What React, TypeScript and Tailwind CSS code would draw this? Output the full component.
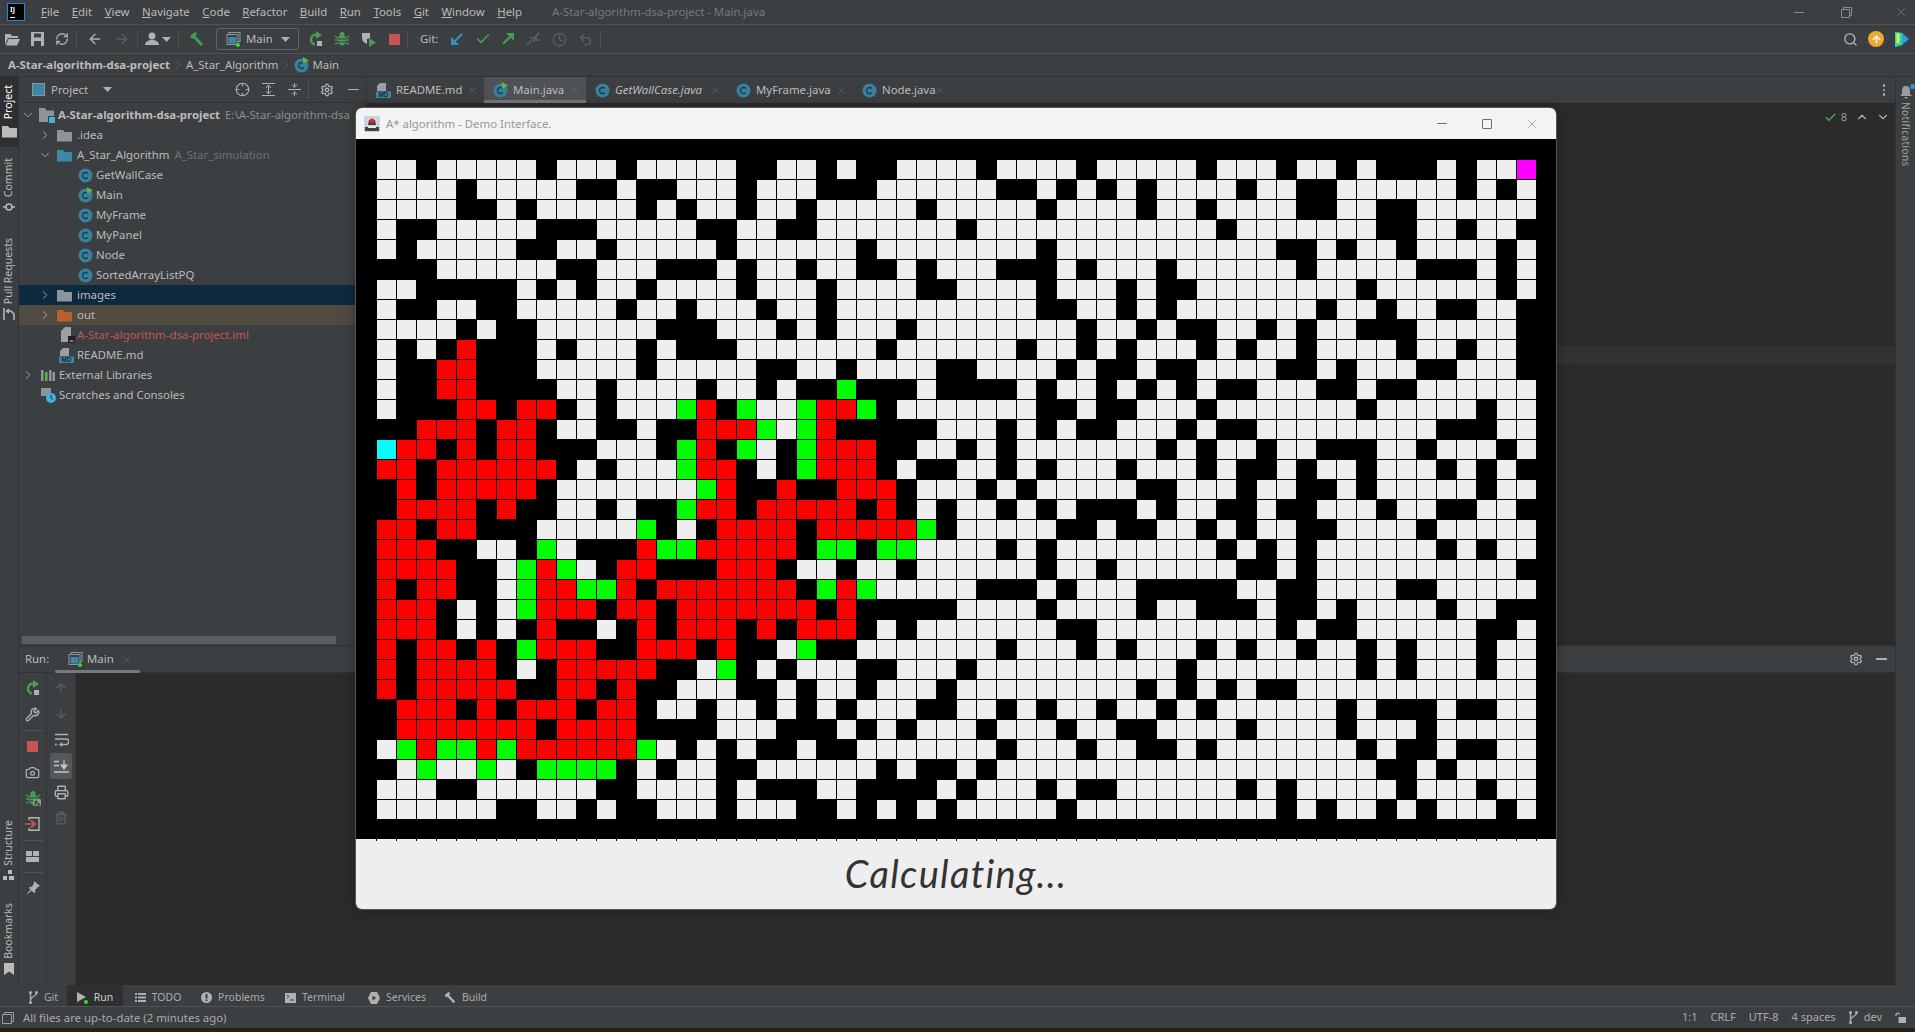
import { ReactNode } from "react";
import {
  ArrowDown,
  ArrowLeft,
  ArrowRight,
  ArrowUp,
  Camera,
  Check,
  ChevronDown,
  ChevronRight,
  ChevronUp,
  Clock,
  Crosshair,
  Printer,
  RefreshCw,
  Search,
  Settings,
  Trash2,
  Undo2,
  Wrench,
  X,
} from "lucide-react";

const GRID_LEFT = [
  "..#.....#...#.....##..#.##...",
  "....#.....##.##...#...###....",
  "....##.#.....#.#..#..#.....#.",
  ".##.....###.....##..##.......",
  ".#.....##..#.....#......#....",
  "###......##...###.#..#..##.#.",
  "..#####.#.#..#....#...#....##",
  ".##..##.....#..#...#..#......",
  "....#.##......###...#.#...#..",
  ".#.#R###.#...#.###.......#...",
  ".##RR###.....#.....##..#....#",
  ".##RR####..#....#..#.##G###.#",
  ".###RR#RR#.#...GR#G..GRRG#...",
  "##RRR#RR#..##.##RRRG.GR#####.",
  "CRR#R#RR###...#GR#G.#GRRR##..",
  "RR#RRRRRR#.#...GRR#.#GRRR#.##",
  "#R#RRRRR#.......GR##R##RRR#..",
  "#RRRR#R##..#.##GRR#RRRRR#R#.#",
  "RR#RR###.....G#.#RRRR#RRRRRG#",
  "RRR##..#G.###RGGRRRRR#GG#GG..",
  "RRRR##.GRG.#RR###RRR#..#..#..",
  "R#RR##.GRRGGR#RRRRRRR#GRG....",
  "RRR#.#.GRRR#RR#RRRRRRR#R#####",
  "RRR#.#.#R##.#R#RRR#R#RRR#.#..",
  "R#RR#R#GRRR##RRR#R##.G##.....",
  "R#RRRR#.#RRRRR##.G#.#...##...",
  "R#RRRRR##RR#R##...##.#..#...#",
  "#RRR#R#RRR#RR#..#..#.#.#...##",
  "#RRRRRRR#RRRR####...###.#.#..",
  ".GRGGRGRRRRRRG.#.#.##.##.....",
  "#.G..G.#GGGG#.#..##......#.##",
  "...##......##....#.###..####.",
  "......##..#.##...#...##.#.#.#",
];

const GRID_RIGHT = [
  ".#....#.....#...#..#.###.#..M",
  "..##.#.#.#....#..##......#.#.",
  "....#....#..#....##..##......",
  "#............#.......##..#..#",
  "....#...........##.#..#....#.",
  "..###.#...#......#.....###.#.",
  "....#...#.##........#......#.",
  "....##..#.#.......#..#..##..#",
  "......#..#.##..#.#..###.....#",
  "...#..#.#...#.#..#....#..#..#",
  "#....#.##.##....##.#...##...#",
  "###.#..#.#.#.##...##.##......",
  "....##.##...#.......#.....#..",
  "..#.#.##...#.##.........###..",
  "#.#.......#.#..#..###..#...#.",
  "..#.#...#...#.##.#..#...#.#.#",
  ".#.#.....##...#..##.#.....#..",
  "..#.#.###.#..##.##...#..##..#",
  ".....##.##..#.#..##....#.....",
  "..#.#........#.#.#......#.#..",
  "....#..#......##.#..........#",
  ".###.#...#####..##....##.....",
  "....#....#..###.##.#....#..##",
  ".....##.........#.##......##.",
  "..#...#.#...#.#..#..#.#...#..",
  "#..........#........#.#...#..",
  ".........#.#.#.##............",
  "..#.#..#..#.#......#.###.##..",
  ".#...#..##....#....#...#.....",
  "..#...#..##.#.......#.##.##..",
  ".#...................##.#....",
  "#...#.##......#.#.....#...#..",
  ".....#..........#.#..#.#...#.",
];

const CELL_CLASS: Record<string, string> = {
  ".": "bg-[#eeeeee]",
  "#": "bg-black",
  R: "bg-[#ff0000]",
  G: "bg-[#00ff00]",
  C: "bg-[#00ffff]",
  M: "bg-[#ff00ff]",
};

const dim = "#afb1b3";

function FolderIcon({ color = "#8c959c" }: { color?: string }) {
  return (
    <svg width="15" height="13" viewBox="0 0 15 13" className="shrink-0">
      <path d="M0 1h6l1.500 2H15v9.500H0z" fill={color} />
    </svg>
  );
}

function RootFolderIcon() {
  return (
    <svg width="16" height="15" viewBox="0 0 16 15" className="shrink-0">
      <path d="M0 0h6l1.500 2.500H15V8H9v6H0z" fill="#8c959c" />
      <rect x="10" y="9" width="6" height="6" fill="#3fb0e0" />
    </svg>
  );
}

function ClassIcon({ run }: { run?: boolean }) {
  return (
    <svg width="15" height="15" viewBox="0 0 15 15" className="shrink-0 overflow-visible">
      <circle cx="7.500" cy="7.500" r="7" fill="#3b7f9e" />
      <path d="M9.800 5.500a3 3 0 1 0 0 4" fill="none" stroke="#173f50" strokeWidth="1.400" />
      {run && <path d="M9 -1l6 3.500L9 6z" fill="#62b543" />}
    </svg>
  );
}

function MdIcon() {
  return (
    <svg width="15" height="15" viewBox="0 0 15 15" className="shrink-0">
      <path d="M4 0h6v8H1V3z" fill="#9aa0a5" />
      <rect x="0" y="8.500" width="15" height="6.500" fill="#3b87a8" />
      <text x="7.500" y="14" textAnchor="middle" fontSize="6.500" fontWeight="700" fill="#1e2b32" fontFamily="Liberation Sans, sans-serif">
        MD
      </text>
    </svg>
  );
}

function ImlIcon() {
  return (
    <svg width="14" height="16" viewBox="0 0 14 16" className="shrink-0">
      <path d="M4 0h6v15H0V4z" fill="#9aa0a5" />
      <rect x="7" y="9" width="7" height="7" fill="#1e1f20" />
      <rect x="8.500" y="13.500" width="4" height="1" fill="#d0d0d0" />
    </svg>
  );
}

function RunConfigIcon({ size = 15 }: { size?: number }) {
  return (
    <svg width={size} height={size} viewBox="0 0 15 15" className="shrink-0 overflow-visible">
      <rect x="3" y="0.500" width="11" height="9" fill="none" stroke="#8c959c" />
      <rect x="1" y="2.500" width="11" height="10" fill="#3c3f41" stroke="#8c959c" />
      <rect x="2.500" y="5" width="8" height="6.500" fill="#3b87a8" />
      <circle cx="12" cy="13" r="2" fill="#2fe02f" />
    </svg>
  );
}

function RerunIcon() {
  return (
    <svg width="16" height="16" viewBox="0 0 16 16" className="shrink-0">
      <path d="M8 3.500A5 5 0 0 0 3 8.500c0 2.500 1.700 4.500 4 5" fill="none" stroke="#499c54" strokeWidth="2.400" />
      <path d="M8 0l6 4-6 4z" fill="#499c54" />
      <rect x="9" y="10" width="5" height="5" fill="#afb1b3" />
    </svg>
  );
}

function BugIcon({ color = "#499c54", badge }: { color?: string; badge?: boolean }) {
  return (
    <svg width="16" height="16" viewBox="0 0 16 16" className="shrink-0">
      <ellipse cx="8" cy="9" rx="4" ry="5.500" fill={color} />
      <circle cx="8" cy="3.500" r="2.500" fill={color} />
      <path d="M1 5l3 2M15 5l-3 2M1 9h3M15 9h-3M1 13.500l3-2M15 13.500l-3-2" stroke={color} strokeWidth="1.500" />
      <path d="M4 8h8M4 11h8" stroke="#3c3f41" strokeWidth="1" />
      {badge && <path d="M9 10h7v6H9zM11 15l4-4M12 11h3v3" fill="#3c3f41" stroke="#afb1b3" />}
    </svg>
  );
}

function CoverageIcon() {
  return (
    <svg width="16" height="16" viewBox="0 0 16 16" className="shrink-0">
      <path d="M1 2h8v5l-3 1v5c-3-1-5-3-5-6z" fill="#afb1b3" />
      <path d="M8 7l7 4.500L8 16z" fill="#499c54" />
    </svg>
  );
}

function StopSquare() {
  return <div className="h-[11px] w-[11px] shrink-0 bg-[#c75450]" />;
}

function HammerIcon({ color = "#499c54", size = 16 }: { color?: string; size?: number }) {
  return (
    <svg width={size} height={size} viewBox="0 0 16 16" className="shrink-0">
      <path d="M2 5l5-4 2 2-1.500 2L15 13l-2 2-7.500-8L4 8z" fill={color} />
    </svg>
  );
}

function UserIcon() {
  return (
    <svg width="15" height="14" viewBox="0 0 15 14" className="shrink-0">
      <circle cx="7" cy="4" r="3.500" fill="#afb1b3" />
      <path d="M0 13c0-3 3-5 7-5s7 2 7 5z" fill="#afb1b3" />
    </svg>
  );
}

function OpenFolderIcon() {
  return (
    <svg width="15" height="13" viewBox="0 0 15 13" className="shrink-0">
      <path d="M0 1h5.500L7 3h6v2H3L0 12z" fill="#afb1b3" />
      <path d="M3.500 6H15l-3 6.500H.800z" fill="#afb1b3" />
    </svg>
  );
}

function SaveIcon() {
  return (
    <svg width="13" height="14" viewBox="0 0 13 14" className="shrink-0">
      <path d="M0 0h13v14H0zM3 1.500v4h7v-4zM3 9v5h7V9z" fill="#afb1b3" fillRule="evenodd" />
    </svg>
  );
}

function Caret({ color = "#afb1b3" }: { color?: string }) {
  return (
    <svg width="9" height="5" viewBox="0 0 9 5" className="shrink-0">
      <path d="M0 0h9L4.500 5z" fill={color} />
    </svg>
  );
}

function ExpandIcon({ collapse }: { collapse?: boolean }) {
  return (
    <svg width="13" height="13" viewBox="0 0 13 13" className="shrink-0">
      {collapse ? (
        <path d="M0 6.500h13M6.500 0v3M4 1.500l2.500 3 2.500-3M6.500 13v-3M4 11.500l2.500-3 2.500 3" stroke="#afb1b3" fill="none" />
      ) : (
        <path d="M0 .500h13M0 12.500h13M4 5l2.500-3L9 5M4 8l2.500 3L9 8M6.500 2v9" stroke="#afb1b3" fill="none" />
      )}
    </svg>
  );
}

function Divider() {
  return <div className="mx-[7px] h-[18px] w-px shrink-0 bg-[#515151]" />;
}

function WrapIcon() {
  return (
    <svg width="15" height="14" viewBox="0 0 15 14" className="shrink-0">
      <path d="M1 1.500h13M1 6h11a2.500 2.500 0 0 1 0 5.500H7" stroke="#afb1b3" strokeWidth="1.500" fill="none" />
      <path d="M8 9l-3 2.500L8 14z" fill="#afb1b3" />
      <path d="M1 11.500h3" stroke="#afb1b3" strokeWidth="1.500" strokeDasharray="1.500 1" />
    </svg>
  );
}

function ScrollEndIcon() {
  return (
    <svg width="15" height="13" viewBox="0 0 15 13" className="shrink-0">
      <path d="M0 1.500h5M0 5.500h5M0 12h15" stroke="#c4c6c8" strokeWidth="1.500" />
      <path d="M10 0v7M7 5l3 4 3-4z" stroke="#c4c6c8" fill="#c4c6c8" strokeWidth="1.200" />
    </svg>
  );
}

function ExitIcon() {
  return (
    <svg width="15" height="14" viewBox="0 0 15 14" className="shrink-0">
      <path d="M4 3V.700h10v12.600H4V11" stroke="#afb1b3" strokeWidth="1.400" fill="none" />
      <path d="M0 7h8M6 3.500L10 7l-4 3.500" stroke="#c75450" strokeWidth="1.700" fill="none" />
    </svg>
  );
}

function LayoutIcon() {
  return (
    <svg width="13" height="11" viewBox="0 0 13 11" className="shrink-0">
      <path d="M0 0h6v5H0zM7 0h6v5H7zM0 6h13v5H0z" fill="#afb1b3" />
    </svg>
  );
}

function PinIcon() {
  return (
    <svg width="14" height="14" viewBox="0 0 14 14" className="shrink-0">
      <path d="M8 0l6 5-2 1-3 3 .5 2-1.500 1L3 7l1-1.500 2 .5 2-4zM4.500 8.500L0 14l5.500-4z" fill="#afb1b3" />
    </svg>
  );
}

function BranchIcon({ color = "#afb1b3" }: { color?: string }) {
  return (
    <svg width="9" height="13" viewBox="0 0 9 13" className="shrink-0">
      <circle cx="1.500" cy="1.500" r="1.500" fill={color} />
      <circle cx="1.500" cy="11.500" r="1.500" fill={color} />
      <circle cx="7.500" cy="1.500" r="1.500" fill={color} />
      <path d="M1.500 2v9M7.500 2c0 4-6 3-6 7" stroke={color} strokeWidth="1.300" fill="none" />
    </svg>
  );
}

function VText({ children, className = "" }: { children: ReactNode; className?: string }) {
  return <span className={`rotate-180 whitespace-nowrap [writing-mode:vertical-rl] ${className}`}>{children}</span>;
}

function Chevron({ open }: { open?: boolean }) {
  return open ? (
    <ChevronDown size={14} strokeWidth={1.500} color={dim} className="shrink-0" />
  ) : (
    <ChevronRight size={14} strokeWidth={1.500} color={dim} className="shrink-0" />
  );
}

function TreeRow({ pad, bg = "", children }: { pad: string; bg?: string; children: ReactNode }) {
  return <div className={`flex h-5 shrink-0 items-center whitespace-nowrap ${pad} ${bg}`}>{children}</div>;
}

function ProjectTree() {
  return (
    <div className="flex flex-col pt-[2px] text-[11.4px] text-[#bbbbbb]">
      <TreeRow pad="pl-[2px]">
        <Chevron open />
        <span className="ml-[4px]">
          <RootFolderIcon />
        </span>
        <span className="ml-[3px] font-bold">A-Star-algorithm-dsa-project</span>
        <span className="ml-[5px] text-[#8a8d8f]">E:\A-Star-algorithm-dsa</span>
      </TreeRow>
      <TreeRow pad="pl-[19px]">
        <Chevron />
        <span className="ml-[5px]">
          <FolderIcon />
        </span>
        <span className="ml-[5px]">.idea</span>
      </TreeRow>
      <TreeRow pad="pl-[19px]">
        <Chevron open />
        <span className="ml-[5px]">
          <FolderIcon color="#3f87a6" />
        </span>
        <span className="ml-[5px]">A_Star_Algorithm</span>
        <span className="ml-[5px] text-[#6e7072]">A_Star_simulation</span>
      </TreeRow>
      {["GetWallCase", "Main", "MyFrame", "MyPanel", "Node", "SortedArrayListPQ"].map((name) => (
        <TreeRow key={name} pad="pl-[59px]">
          <ClassIcon run={name === "Main"} />
          <span className="ml-[3px]">{name}</span>
        </TreeRow>
      ))}
      <TreeRow pad="pl-[19px]" bg="bg-[#0d293e]">
        <Chevron />
        <span className="ml-[5px]">
          <FolderIcon />
        </span>
        <span className="ml-[5px]">images</span>
      </TreeRow>
      <TreeRow pad="pl-[19px]" bg="bg-[#4f4b41]">
        <Chevron />
        <span className="ml-[5px]">
          <FolderIcon color="#b8612e" />
        </span>
        <span className="ml-[5px]">out</span>
      </TreeRow>
      <TreeRow pad="pl-[42px]">
        <ImlIcon />
        <span className="ml-[2px] text-[#c75450]">A-Star-algorithm-dsa-project.iml</span>
      </TreeRow>
      <TreeRow pad="pl-[40px]">
        <MdIcon />
        <span className="ml-[3px]">README.md</span>
      </TreeRow>
      <TreeRow pad="pl-[2px]">
        <Chevron />
        <svg width="14" height="13" viewBox="0 0 14 13" className="ml-[6px] shrink-0">
          <path d="M0 1h2.500v11H0zM8 1h2.500v11H8zM11.500 3H14v9h-2.500z" fill="#8c959c" />
          <path d="M4 3h2.500v9H4z" fill="#62b543" />
        </svg>
        <span className="ml-[4px]">External Libraries</span>
      </TreeRow>
      <TreeRow pad="pl-[22px]">
        <svg width="15" height="15" viewBox="0 0 15 15" className="mr-[3px] shrink-0">
          <path d="M0 0h10v8H0z" fill="#8c959c" />
          <circle cx="10" cy="10" r="5" fill="#3fb0e0" />
          <path d="M10 7v3l2 1.500" stroke="#1e2b32" fill="none" />
        </svg>
        <span>Scratches and Consoles</span>
      </TreeRow>
    </div>
  );
}

function EditorTab({ name, width, italic, active, icon }: { name: string; width: string; italic?: boolean; active?: boolean; icon: ReactNode }) {
  return (
    <div className={`relative flex h-full shrink-0 items-center pl-[9px] ${width} ${active ? "bg-[#4e5254]" : ""}`}>
      {icon}
      <span className={`ml-[5px] text-[#bbbbbb] ${italic ? "italic" : ""}`}>{name}</span>
      <X size={11} strokeWidth={1} color="#7a7c7e" className="absolute right-[6px] top-[8px]" />
      {active && <div className="absolute inset-x-0 bottom-0 h-[3px] bg-[#747a80]" />}
    </div>
  );
}

function MainToolbar() {
  return (
    <div className="flex h-[29px] shrink-0 items-center border-b border-[#515151] pl-[5px]">
      <OpenFolderIcon />
      <span className="ml-[11px]">
        <SaveIcon />
      </span>
      <RefreshCw size={14} strokeWidth={2.200} color={dim} className="ml-[11px]" />
      <Divider />
      <ArrowLeft size={16} strokeWidth={2} color={dim} className="ml-[3px]" />
      <ArrowRight size={16} strokeWidth={2} color="#5e6163" className="ml-[11px]" />
      <Divider />
      <UserIcon />
      <span className="ml-[2px]">
        <Caret />
      </span>
      <Divider />
      <span className="ml-[2px]">
        <HammerIcon />
      </span>
      <div className="ml-[12px] flex h-[22px] w-[83px] shrink-0 items-center rounded-[3px] border border-[#646464] pl-[9px]">
        <RunConfigIcon />
        <span className="ml-[5px] text-[11.4px] text-[#bbbbbb]">Main</span>
        <span className="ml-[8px]">
          <Caret />
        </span>
      </div>
      <span className="ml-[9px]">
        <RerunIcon />
      </span>
      <span className="ml-[10px]">
        <BugIcon />
      </span>
      <span className="ml-[11px]">
        <CoverageIcon />
      </span>
      <span className="ml-[12px]">
        <StopSquare />
      </span>
      <Divider />
      <span className="ml-[5px] text-[11.4px] text-[#bbbbbb]">Git:</span>
      <svg width="14" height="14" viewBox="0 0 14 14" className="ml-[12px] shrink-0">
        <path d="M12 2L3 11" stroke="#3592c4" strokeWidth="2" />
        <path d="M1 5v8h8z" fill="#3592c4" />
      </svg>
      <Check size={16} strokeWidth={2.500} color="#499c54" className="ml-[11px]" />
      <svg width="14" height="14" viewBox="0 0 14 14" className="ml-[10px] shrink-0">
        <path d="M2 12l9-9" stroke="#499c54" strokeWidth="2" />
        <path d="M5 1h8v8z" fill="#499c54" />
      </svg>
      <svg width="14" height="14" viewBox="0 0 14 14" className="ml-[11px] shrink-0">
        <path d="M1 13l5-5M8 6l5-5M4 6h4v4M10 4v4h4" stroke="#5e6163" strokeWidth="1.600" fill="none" />
      </svg>
      <Clock size={15} strokeWidth={2} color="#5e6163" className="ml-[12px]" />
      <Undo2 size={15} strokeWidth={2} color="#5e6163" className="ml-[11px]" />
      <Divider />
      <div className="ml-auto flex items-center pr-[6px]">
        <Search size={15} strokeWidth={2.200} color={dim} />
        <div className="ml-[10px] flex h-[16px] w-[16px] items-center justify-center rounded-full bg-[#f0a732]">
          <ArrowUp size={11} strokeWidth={3} color="#ffffff" />
        </div>
        <svg width="14" height="16" viewBox="0 0 14 16" className="ml-[11px] shrink-0">
          <path d="M0 1l7 1 7 6-7 6-7 2z" fill="#2b9fe0" />
          <path d="M0 1l7 1v12l-7 2z" fill="#27d9a0" />
          <path d="M1.500 2.500h3v10h-3z" fill="#f2e24a" />
        </svg>
      </div>
    </div>
  );
}

function MenuBar() {
  const items = ["File", "Edit", "View", "Navigate", "Code", "Refactor", "Build", "Run", "Tools", "Git", "Window", "Help"];
  return (
    <div className="flex h-[25px] shrink-0 items-center border-b border-[#515151] text-[11.4px] text-[#bbbbbb]">
      <div className="ml-[8px] flex h-[16px] w-[16px] shrink-0 flex-col justify-between bg-black px-[2px] py-[2px] ring-1 ring-[#2f7fe0]">
        <span className="text-[7px] font-bold leading-[8px] text-white">IJ</span>
        <span className="h-px w-[5px] bg-white" />
      </div>
      <div className="ml-[17px] flex gap-[12.500px]">
        {items.map((item) => (
          <span key={item}>
            <u>{item[0]}</u>
            {item.slice(1)}
          </span>
        ))}
      </div>
      <span className="ml-[30px] text-[#787a7c]">A-Star-algorithm-dsa-project - Main.java</span>
      <div className="ml-auto flex items-center pr-[7px] text-[#8a8d8f]">
        <div className="h-px w-[10px] bg-[#8a8d8f]" />
        <svg width="11" height="11" viewBox="0 0 11 11" className="ml-[37px]">
          <path d="M2.500 2.500V.500h8v8H8.500M.500 2.500h8v8h-8z" fill="none" stroke="#8a8d8f" />
        </svg>
        <X size={14} strokeWidth={1} color="#8a8d8f" className="ml-[42px]" />
      </div>
    </div>
  );
}

function Breadcrumb() {
  return (
    <div className="flex h-[23px] shrink-0 items-center border-b border-[#323232] pl-[8px] text-[11.4px] text-[#bbbbbb]">
      <span className="font-bold">A-Star-algorithm-dsa-project</span>
      <ChevronRight size={14} strokeWidth={1} color="#707274" className="mx-px" />
      <span>A_Star_Algorithm</span>
      <ChevronRight size={14} strokeWidth={1} color="#707274" className="mx-px" />
      <ClassIcon run />
      <span className="ml-[3px]">Main</span>
    </div>
  );
}

function LeftStripe() {
  return (
    <div className="flex w-[19px] shrink-0 flex-col items-center border-r border-[#323232] text-[10.5px] text-[#bbbbbb]">
      <div className="flex h-[70px] w-full flex-col items-center bg-[#2d2f30] pt-[8px] text-white">
        <VText>Project</VText>
        <div className="mt-[6px]">
          <FolderIcon color="#bbbbbb" />
        </div>
      </div>
      <VText className="mt-[11px]">Commit</VText>
      <svg width="12" height="12" viewBox="0 0 12 12" className="mt-[4px]">
        <circle cx="6" cy="6" r="3" fill="none" stroke="#bbbbbb" strokeWidth="1.500" />
        <path d="M0 6h3M9 6h3" stroke="#bbbbbb" strokeWidth="1.500" />
      </svg>
      <VText className="mt-[25px]">Pull Requests</VText>
      <svg width="12" height="12" viewBox="0 0 12 12" className="mt-[4px]">
        <path d="M1 0v12M11 12V6L8 3H4M6 1L3.500 3 6 5" stroke="#bbbbbb" strokeWidth="1.500" fill="none" />
      </svg>
      <VText className="mt-auto">Structure</VText>
      <svg width="12" height="11" viewBox="0 0 12 11" className="mt-[4px]">
        <path d="M5 0h4v4H5zM0 6h4v4H0zM6 6h5v4H6z" fill="#bbbbbb" />
      </svg>
      <VText className="mt-[22px]">Bookmarks</VText>
      <svg width="10" height="12" viewBox="0 0 10 12" className="mb-[10px] mt-[4px]">
        <path d="M0 0h10v12L5 8.500 0 12z" fill="#bbbbbb" />
      </svg>
    </div>
  );
}

function RightStripe() {
  return (
    <div className="flex w-[20px] shrink-0 flex-col items-center border-l border-[#323232] pt-[9px] text-[10px] text-[#a0a2a4]">
      <div className="relative">
        <svg width="12" height="13" viewBox="0 0 12 13">
          <path d="M6 0c3 0 4 2 4 5v3l2 2H0l2-2V5c0-3 1-5 4-5zM4 11h4l-2 2z" fill="#9a9c9e" />
        </svg>
        <div className="absolute right-[-3px] top-[-2px] h-[5px] w-[5px] rounded-full bg-[#3592c4]" />
      </div>
      <span className="mt-[3px] whitespace-nowrap tracking-[0.4px] [writing-mode:vertical-rl]">Notifications</span>
    </div>
  );
}

function RunIconCell({ children, active }: { children: ReactNode; active?: boolean }) {
  return (
    <div className={`flex h-[26px] w-full items-center justify-center ${active ? "rounded-[3px] bg-[#55585a]" : ""}`}>{children}</div>
  );
}

function RunSep() {
  return (
    <div className="flex h-[6px] w-full items-center justify-center">
      <div className="h-px w-[20px] bg-[#515151]" />
    </div>
  );
}

function RunPanel() {
  return (
    <div className="flex flex-1 flex-col">
      <div className="flex h-[27px] shrink-0 items-center border-b border-[#323232] text-[11.4px] text-[#bbbbbb]">
        <span className="ml-[6px] w-[30px]">Run:</span>
        <div className="relative flex h-full w-[85px] items-center pl-[13px]">
          <RunConfigIcon />
          <span className="ml-[4px]">Main</span>
          <X size={11} strokeWidth={1} color="#7a7c7e" className="ml-[7px]" />
          <div className="absolute inset-x-0 bottom-[-1px] h-[3px] rounded-full bg-[#747a80]" />
        </div>
        <Settings size={14} strokeWidth={2.200} color={dim} className="ml-auto mr-[13px]" />
        <div className="mr-[8px] h-[1.500px] w-[11px] bg-[#afb1b3]" />
      </div>
      <div className="flex min-h-0 flex-1">
        <div className="flex w-[28px] shrink-0 flex-col items-center border-r border-[#323232] pt-[2px]">
          <RunIconCell>
            <RerunIcon />
          </RunIconCell>
          <RunIconCell>
            <Wrench size={15} strokeWidth={2.200} color={dim} />
          </RunIconCell>
          <RunSep />
          <RunIconCell>
            <StopSquare />
          </RunIconCell>
          <RunIconCell>
            <Camera size={15} strokeWidth={2} color={dim} />
          </RunIconCell>
          <RunIconCell>
            <BugIcon badge />
          </RunIconCell>
          <RunIconCell>
            <ExitIcon />
          </RunIconCell>
          <RunSep />
          <RunIconCell>
            <LayoutIcon />
          </RunIconCell>
          <RunSep />
          <RunIconCell>
            <PinIcon />
          </RunIconCell>
        </div>
        <div className="flex w-[29px] shrink-0 flex-col items-center border-r border-[#323232] px-[3px] pt-[2px]">
          <RunIconCell>
            <ArrowUp size={14} strokeWidth={2} color="#5e6163" />
          </RunIconCell>
          <RunIconCell>
            <ArrowDown size={14} strokeWidth={2} color="#5e6163" />
          </RunIconCell>
          <RunIconCell>
            <WrapIcon />
          </RunIconCell>
          <RunIconCell active>
            <ScrollEndIcon />
          </RunIconCell>
          <RunIconCell>
            <Printer size={15} strokeWidth={2.200} color={dim} />
          </RunIconCell>
          <RunIconCell>
            <Trash2 size={14} strokeWidth={2.200} color="#5e6163" />
          </RunIconCell>
        </div>
        <div className="flex-1 bg-[#2b2b2b]" />
      </div>
    </div>
  );
}

function BottomTool({ icon, label, width, active }: { icon: ReactNode; label: string; width: string; active?: boolean }) {
  return (
    <div className={`flex h-full shrink-0 items-center justify-center gap-[6px] pt-[4px] ${width} ${active ? "bg-[#2d2f30] text-[#d0d0d0]" : ""}`}>
      {icon}
      <span>{label}</span>
    </div>
  );
}

function BottomToolbar() {
  return (
    <div className="flex h-[22px] shrink-0 items-center border-b border-[#515151] pl-[20px] text-[10.5px] text-[#a9abad]">
      <BottomTool width="w-[47px]" label="Git" icon={<BranchIcon />} />
      <BottomTool
        width="w-[56px]"
        active
        label="Run"
        icon={
          <svg width="11" height="12" viewBox="0 0 11 12" className="overflow-visible">
            <path d="M0 0l9 5-9 5z" fill="#afb1b3" />
            <circle cx="9" cy="10" r="2" fill="#2fe02f" />
          </svg>
        }
      />
      <BottomTool
        width="w-[70px]"
        label="TODO"
        icon={
          <svg width="11" height="9" viewBox="0 0 11 9">
            <path d="M0 0h2v2H0zM3 0h8v2H3zM0 3.500h2v2H0zM3 3.500h8v2H3zM0 7h2v2H0zM3 7h8v2H3z" fill="#afb1b3" />
          </svg>
        }
      />
      <BottomTool
        width="w-[80px]"
        label="Problems"
        icon={
          <svg width="11" height="11" viewBox="0 0 11 11">
            <circle cx="5.500" cy="5.500" r="5.500" fill="#afb1b3" />
            <path d="M4.500 2h2v4.500h-2zM4.500 7.500h2v1.500h-2z" fill="#3c3f41" />
          </svg>
        }
      />
      <BottomTool
        width="w-[84px]"
        label="Terminal"
        icon={
          <svg width="11" height="10" viewBox="0 0 11 10">
            <path d="M0 0h11v10H0z" fill="#afb1b3" />
            <path d="M2 2l2 1.500L2 5M5 7h4" stroke="#3c3f41" fill="none" />
          </svg>
        }
      />
      <BottomTool
        width="w-[80px]"
        label="Services"
        icon={
          <svg width="12" height="12" viewBox="0 0 12 12">
            <path d="M3 0h6l3 6-3 6H3L0 6z" fill="#afb1b3" />
            <path d="M4.500 3.500L8.500 6l-4 2.500z" fill="#3c3f41" />
          </svg>
        }
      />
      <BottomTool width="w-[56px]" label="Build" icon={<HammerIcon color="#afb1b3" size={13} />} />
    </div>
  );
}

function StatusBar() {
  return (
    <div className="flex h-[21px] shrink-0 items-center text-[11.4px] text-[#a9abad]">
      <svg width="12" height="12" viewBox="0 0 12 12" className="ml-[2px] shrink-0">
        <path d="M2.500 2.500V.500h9v9H9.500M.500 2.500h9v9h-9z" fill="none" stroke="#9a9c9e" />
      </svg>
      <span className="ml-[9px]">All files are up-to-date (2 minutes ago)</span>
      <div className="ml-auto flex items-center gap-[13px] pr-[9px] text-[11px]">
        <span>1:1</span>
        <span>CRLF</span>
        <span>UTF-8</span>
        <span>4 spaces</span>
        <span className="flex items-center gap-[6px]">
          <BranchIcon />
          dev
        </span>
        <svg width="11" height="11" viewBox="0 0 11 11" className="shrink-0">
          <path d="M1 4V2.500a1.800 1.800 0 0 1 3.500 0" stroke="#afb1b3" fill="none" strokeWidth="1.300" />
          <path d="M3.500 5H11v6H3.500z" fill="#afb1b3" />
        </svg>
      </div>
    </div>
  );
}

function DemoWindow() {
  return (
    <div className="absolute left-[356px] top-[108px] flex w-[1200px] flex-col overflow-hidden rounded-[6px] shadow-[0_0_14px_rgba(0,0,0,0.35)] ring-1 ring-[#555555]">
      <div className="flex h-[31px] shrink-0 items-center bg-[#f3f3f3] pl-[8px] text-[11.4px] text-[#989898]">
        <svg width="16" height="16" viewBox="0 0 16 16" className="shrink-0">
          <rect x="0" y="0" width="16" height="16" fill="#c9d5e3" />
          <path d="M5 4h6l1 5H4zM1 11h14v4H1z" fill="#3e4044" />
          <circle cx="8" cy="5" r="2.500" fill="#e8222a" />
          <path d="M4 10h8v2H4z" fill="#e8e8e8" />
        </svg>
        <span className="ml-[6px]">A* algorithm - Demo Interface.</span>
        <div className="ml-auto flex items-center pr-[17px]">
          <div className="h-px w-[10px] bg-[#707070]" />
          <div className="ml-[35px] h-[10px] w-[10px] rounded-[1px] border border-[#707070]" />
          <X size={14} strokeWidth={1} color="#707070" className="ml-[33px]" />
        </div>
      </div>
      <div className="h-[700px] bg-black pl-[21px] pt-[21px]">
        <div className="grid grid-cols-[repeat(58,19px)] auto-rows-[19px] gap-px">
          {GRID_LEFT.map((row, r) =>
            (row + GRID_RIGHT[r]).split("").map((cell, c) => <div key={`${r}-${c}`} className={CELL_CLASS[cell]} />),
          )}
        </div>
      </div>
      <div className="relative flex h-[70px] items-center justify-center bg-[#eeeeee] pb-[2px]">
        <div className="absolute left-0 top-0 flex pl-[20px]">
          {Array.from({ length: 59 }, (_, i) => (
            <div key={i} className="h-[2px] w-[20px] border-l border-black" />
          ))}
        </div>
        <span className="text-[38px] italic leading-none tracking-[1.300px] text-[#333333] [font-family:Lato,cursive]">Calculating...</span>
      </div>
    </div>
  );
}

export default function App() {
  return (
    <div className="relative flex h-[1032px] w-[1915px] flex-col overflow-hidden bg-[#3c3f41] [font-family:'Noto_Sans',sans-serif]">
      <MenuBar />
      <MainToolbar />
      <Breadcrumb />
      <div className="flex min-h-0 flex-1">
        <LeftStripe />
        <div className="flex min-w-0 flex-1 flex-col">
          <div className="flex h-[569px] shrink-0 border-b border-[#323232]">
            <div className="flex w-[348px] shrink-0 flex-col border-r border-[#323232]">
              <div className="flex h-[26px] shrink-0 items-center border-b border-[#323232] pl-[13px] text-[11.4px] text-[#bbbbbb]">
                <svg width="13" height="13" viewBox="0 0 13 13" className="shrink-0">
                  <rect x="0.500" y="0.500" width="12" height="12" fill="#3b87a8" stroke="#8c959c" />
                </svg>
                <span className="ml-[6px] pt-px">Project</span>
                <span className="ml-[15px]">
                  <Caret />
                </span>
                <Crosshair size={15} strokeWidth={1.800} color={dim} className="ml-[123px]" />
                <span className="ml-[12px]">
                  <ExpandIcon />
                </span>
                <span className="ml-[13px]">
                  <ExpandIcon collapse />
                </span>
                <Divider />
                <Settings size={14} strokeWidth={2.200} color={dim} className="ml-[4px]" />
                <div className="ml-[14px] h-[1.500px] w-[11px] bg-[#afb1b3]" />
              </div>
              <div className="relative min-h-0 flex-1 overflow-hidden">
                <ProjectTree />
                <div className="absolute bottom-[1px] left-[3px] h-[8px] w-[314px] bg-[#5a5c5e]" />
              </div>
            </div>
            <div className="flex min-w-0 flex-1 flex-col">
              <div className="flex h-[26px] shrink-0 items-center text-[11.4px]">
                <EditorTab name="README.md" width="w-[117px]" icon={<MdIcon />} />
                <EditorTab name="Main.java" width="w-[102px]" active icon={<ClassIcon run />} />
                <EditorTab name="GetWallCase.java" width="w-[141px]" italic icon={<ClassIcon />} />
                <EditorTab name="MyFrame.java" width="w-[126px]" icon={<ClassIcon />} />
                <EditorTab name="Node.java" width="w-[98px]" icon={<ClassIcon />} />
                <div className="ml-auto mr-[10px] flex flex-col gap-[2px]">
                  <div className="h-[2.500px] w-[2.500px] rounded-full bg-[#afb1b3]" />
                  <div className="h-[2.500px] w-[2.500px] rounded-full bg-[#afb1b3]" />
                  <div className="h-[2.500px] w-[2.500px] rounded-full bg-[#afb1b3]" />
                </div>
              </div>
              <div className="flex min-h-0 flex-1 flex-col bg-[#2b2b2b]">
                <div className="flex h-[28px] shrink-0 items-center justify-end pr-[5px] text-[11px] text-[#8a9aa8]">
                  <Check size={13} strokeWidth={3} color="#499c54" />
                  <span className="ml-[4px]">8</span>
                  <ChevronUp size={14} strokeWidth={2} color={dim} className="ml-[8px]" />
                  <ChevronDown size={14} strokeWidth={2} color={dim} className="ml-[7px]" />
                </div>
                <div className="mt-[215px] h-[18px] bg-[#323232]" />
              </div>
            </div>
          </div>
          <RunPanel />
        </div>
        <RightStripe />
      </div>
      <BottomToolbar />
      <StatusBar />
      <div className="h-[4px] shrink-0 bg-[#2e1d12]" />
      <DemoWindow />
    </div>
  );
}
